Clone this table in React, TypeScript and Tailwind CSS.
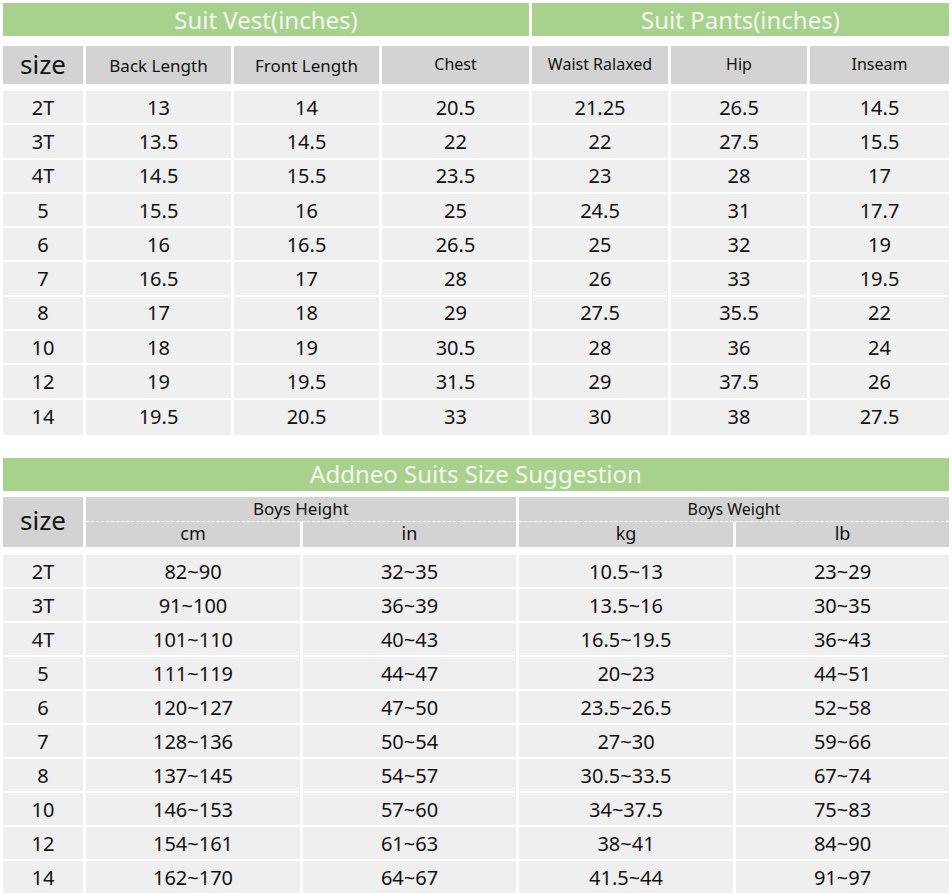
import React from 'react';

// Size chart data
const vestPants = [
  ['2T', '13', '14', '20.5', '21.25', '26.5', '14.5'],
  ['3T', '13.5', '14.5', '22', '22', '27.5', '15.5'],
  ['4T', '14.5', '15.5', '23.5', '23', '28', '17'],
  ['5', '15.5', '16', '25', '24.5', '31', '17.7'],
  ['6', '16', '16.5', '26.5', '25', '32', '19'],
  ['7', '16.5', '17', '28', '26', '33', '19.5'],
  ['8', '17', '18', '29', '27.5', '35.5', '22'],
  ['10', '18', '19', '30.5', '28', '36', '24'],
  ['12', '19', '19.5', '31.5', '29', '37.5', '26'],
  ['14', '19.5', '20.5', '33', '30', '38', '27.5'],
];

const suggestion = [
  ['2T', '82~90', '32~35', '10.5~13', '23~29'],
  ['3T', '91~100', '36~39', '13.5~16', '30~35'],
  ['4T', '101~110', '40~43', '16.5~19.5', '36~43'],
  ['5', '111~119', '44~47', '20~23', '44~51'],
  ['6', '120~127', '47~50', '23.5~26.5', '52~58'],
  ['7', '128~136', '50~54', '27~30', '59~66'],
  ['8', '137~145', '54~57', '30.5~33.5', '67~74'],
  ['10', '146~153', '57~60', '34~37.5', '75~83'],
  ['12', '154~161', '61~63', '38~41', '84~90'],
  ['14', '162~170', '64~67', '41.5~44', '91~97'],
];

const topCols = 'grid grid-cols-[80px_145px_145px_147px_136px_136px_139px] gap-x-[3px]';
const bottomCols = 'grid grid-cols-[80px_214px_213px_214px_213px] gap-x-[3px]';

const Title = ({ children, className = '' }: { children: React.ReactNode; className?: string }) => (
  <div
    className={`h-[33px] bg-[#a9d18e] flex items-center justify-center text-[24px] text-[#f2f8ee] leading-none ${className}`}
  >
    {children}
  </div>
);

const App = () => {
  return (
    <div
      className="w-[952px] h-[894px] bg-white overflow-hidden pt-[3px] pl-[3px] text-[#111]"
      style={{ fontFamily: '"Noto Sans", "Open Sans", sans-serif' }}
    >
      {/* TOP TABLE - VEST / PANTS */}
      <div className={topCols}>
        <Title className="col-span-4">Suit Vest(inches)</Title>
        <Title className="col-span-3">Suit Pants(inches)</Title>
      </div>

      <div className={`${topCols} mt-[10px] h-[38px]`}>
        <div className="bg-[#d3d3d3] flex items-center justify-center text-[26px] leading-none pb-[2px]">size</div>
        {['Back Length', 'Front Length', 'Chest', 'Waist Ralaxed', 'Hip', 'Inseam'].map((h, i) => (
          <div
            key={h}
            className={`bg-[#d3d3d3] flex items-center justify-center leading-none ${
              i < 2 ? 'text-[17px]' : 'text-[16px] pb-[3px]'
            }`}
          >
            {h}
          </div>
        ))}
      </div>

      <div className={`${topCols} mt-[7px] gap-y-[2px]`}>
        {vestPants.map((row, r) =>
          row.map((cell, c) => (
            <div
              key={`${r}-${c}`}
              className={`bg-[#efefef] flex items-center justify-center text-[20px] leading-none ${
                r === vestPants.length - 1 ? 'h-[35px]' : 'h-[32.3px] pt-[1px]'
              }`}
            >
              {cell}
            </div>
          ))
        )}
      </div>

      {/* BOTTOM TABLE - SIZE SUGGESTION */}
      <div className="mt-[23px] w-[946px]">
        <Title>Addneo Suits Size Suggestion</Title>
      </div>

      <div className={`${bottomCols} mt-[6px] grid-rows-[25px_25px]`}>
        <div className="row-span-2 bg-[#d3d3d3] flex items-center justify-center text-[26px] leading-none pb-[4px]">
          size
        </div>
        <div className="col-span-2 bg-[#d3d3d3] flex items-center justify-center text-[17px] leading-none border-b border-dashed border-white">
          Boys Height
        </div>
        <div className="col-span-2 bg-[#d3d3d3] flex items-center justify-center text-[16px] leading-none border-b border-dashed border-white">
          Boys Weight
        </div>
        {['cm', 'in', 'kg', 'lb'].map((h) => (
          <div key={h} className="bg-[#d3d3d3] flex items-center justify-center text-[18px] leading-none pb-[2px]">
            {h}
          </div>
        ))}
      </div>

      <div className={`${bottomCols} mt-[8px] gap-y-[2px]`}>
        {suggestion.map((row, r) =>
          row.map((cell, c) => (
            <div
              key={`${r}-${c}`}
              className="bg-[#efefef] h-[32px] pt-[2px] flex items-center justify-center text-[20px] leading-none"
            >
              {cell}
            </div>
          ))
        )}
      </div>
    </div>
  );
};

export default App;
